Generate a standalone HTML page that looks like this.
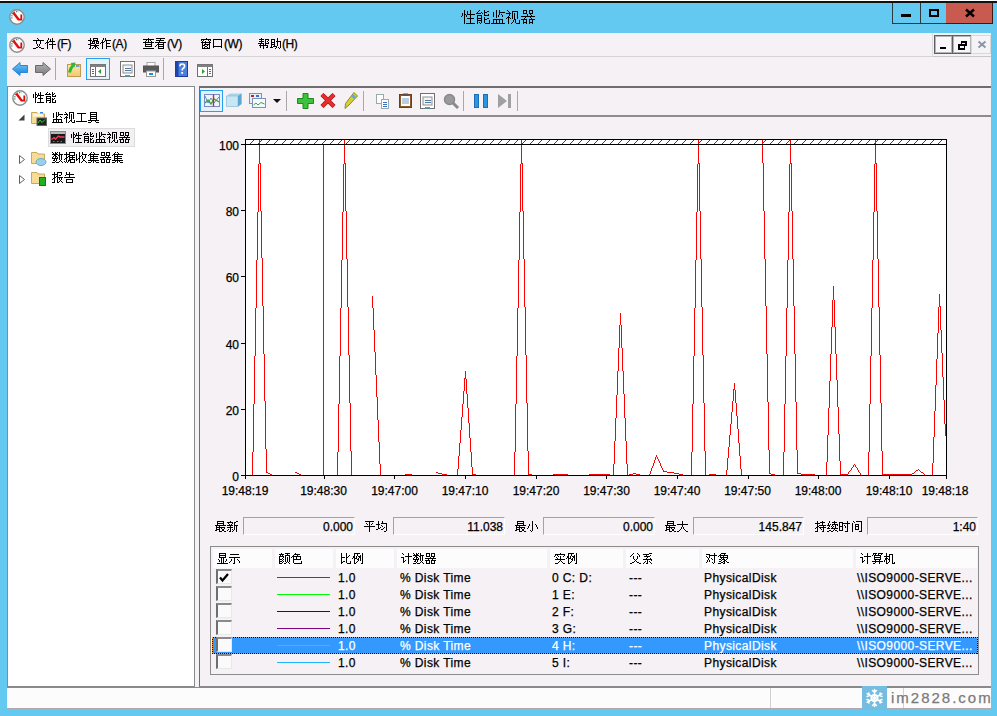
<!DOCTYPE html>
<html><head><meta charset="utf-8">
<style>
*{margin:0;padding:0;box-sizing:border-box}
html,body{width:997px;height:716px;overflow:hidden}
body{position:relative;background:#63c9f0;font-family:"Liberation Sans",sans-serif;font-size:12px;color:#000}
.a{position:absolute}
.t{position:absolute;white-space:nowrap;line-height:14px;-webkit-text-stroke:0.25px currentColor}
.g{vertical-align:top;overflow:visible}
.num{font-size:12px}
.cb{width:16px;height:15px;background:#fbfafb;border-top:2px solid #8a8a8a;border-left:2px solid #6e6e6e;border-right:1px solid #e8e8e8;border-bottom:1px solid #e8e8e8}
.vb{position:absolute;top:517px;height:18px;padding-top:1px;border-top:1px solid #a3a3a3;border-left:1px solid #a3a3a3;border-right:1px solid #fff;border-bottom:1px solid #fff;text-align:right;padding-right:1px;line-height:16px;-webkit-text-stroke:0.25px #000}
svg{overflow:visible}
</style></head><body>
<svg width="0" height="0" style="position:absolute;left:0;top:0"><defs><path id="g15_6027" d="M3 1h1v1h-1zM9 1h1v1h-1zM3 2h1v1h-1zM6 2h1v1h-1zM9 2h1v1h-1zM3 3h1v1h-1zM6 3h1v1h-1zM9 3h1v1h-1zM1 4h1v1h-1zM3 4h1v1h-1zM6 4h1v1h-1zM9 4h1v1h-1zM1 5h1v1h-1zM3 5h2v1h-2zM6 5h8v1h-8zM1 6h1v1h-1zM3 6h1v1h-1zM5 6h1v1h-1zM9 6h1v1h-1zM0 7h1v1h-1zM3 7h1v1h-1zM5 7h1v1h-1zM9 7h1v1h-1zM3 8h1v1h-1zM9 8h1v1h-1zM3 9h1v1h-1zM6 9h7v1h-7zM3 10h1v1h-1zM9 10h1v1h-1zM3 11h1v1h-1zM9 11h1v1h-1zM3 12h1v1h-1zM9 12h1v1h-1zM3 13h1v1h-1zM9 13h1v1h-1zM3 14h1v1h-1zM5 14h9v1h-9z"/><path id="g15_80fd" d="M3 1h1v1h-1zM8 1h1v1h-1zM2 2h1v1h-1zM8 2h1v1h-1zM11 2h2v1h-2zM1 3h1v1h-1zM5 3h1v1h-1zM8 3h3v1h-3zM0 4h5v1h-5zM6 4h1v1h-1zM8 4h1v1h-1zM8 5h1v1h-1zM12 5h1v1h-1zM1 6h5v1h-5zM8 6h5v1h-5zM1 7h1v1h-1zM5 7h1v1h-1zM1 8h1v1h-1zM5 8h1v1h-1zM8 8h1v1h-1zM1 9h5v1h-5zM8 9h1v1h-1zM11 9h2v1h-2zM1 10h1v1h-1zM5 10h1v1h-1zM8 10h3v1h-3zM1 11h5v1h-5zM8 11h1v1h-1zM13 11h1v1h-1zM1 12h1v1h-1zM5 12h1v1h-1zM8 12h1v1h-1zM13 12h1v1h-1zM1 13h1v1h-1zM3 13h1v1h-1zM5 13h1v1h-1zM8 13h1v1h-1zM13 13h1v1h-1zM1 14h1v1h-1zM4 14h1v1h-1zM9 14h5v1h-5z"/><path id="g15_76d1" d="M5 1h1v1h-1zM8 1h1v1h-1zM5 2h1v1h-1zM8 2h1v1h-1zM2 3h1v1h-1zM5 3h1v1h-1zM8 3h6v1h-6zM2 4h1v1h-1zM5 4h1v1h-1zM8 4h1v1h-1zM2 5h1v1h-1zM5 5h1v1h-1zM8 5h1v1h-1zM10 5h1v1h-1zM2 6h1v1h-1zM5 6h1v1h-1zM7 6h1v1h-1zM11 6h1v1h-1zM2 7h1v1h-1zM5 7h1v1h-1zM7 7h1v1h-1zM11 7h1v1h-1zM5 8h1v1h-1zM2 10h10v1h-10zM2 11h1v1h-1zM5 11h1v1h-1zM8 11h1v1h-1zM11 11h1v1h-1zM2 12h1v1h-1zM5 12h1v1h-1zM8 12h1v1h-1zM11 12h1v1h-1zM2 13h1v1h-1zM5 13h1v1h-1zM8 13h1v1h-1zM11 13h1v1h-1zM0 14h14v1h-14z"/><path id="g15_89c6" d="M1 1h1v1h-1zM2 2h1v1h-1zM6 2h6v1h-6zM3 3h1v1h-1zM6 3h1v1h-1zM11 3h1v1h-1zM0 4h5v1h-5zM6 4h1v1h-1zM8 4h1v1h-1zM11 4h1v1h-1zM3 5h1v1h-1zM6 5h1v1h-1zM8 5h1v1h-1zM11 5h1v1h-1zM3 6h1v1h-1zM6 6h1v1h-1zM8 6h1v1h-1zM11 6h1v1h-1zM2 7h1v1h-1zM6 7h1v1h-1zM8 7h1v1h-1zM11 7h1v1h-1zM1 8h3v1h-3zM6 8h1v1h-1zM8 8h1v1h-1zM11 8h1v1h-1zM0 9h1v1h-1zM2 9h1v1h-1zM4 9h1v1h-1zM6 9h1v1h-1zM8 9h1v1h-1zM11 9h1v1h-1zM2 10h1v1h-1zM8 10h2v1h-2zM2 11h1v1h-1zM7 11h1v1h-1zM9 11h1v1h-1zM13 11h1v1h-1zM2 12h1v1h-1zM7 12h1v1h-1zM9 12h1v1h-1zM13 12h1v1h-1zM2 13h1v1h-1zM6 13h1v1h-1zM9 13h1v1h-1zM13 13h1v1h-1zM2 14h1v1h-1zM5 14h1v1h-1zM10 14h4v1h-4z"/><path id="g15_5668" d="M2 1h4v1h-4zM8 1h4v1h-4zM2 2h1v1h-1zM5 2h1v1h-1zM8 2h1v1h-1zM11 2h1v1h-1zM2 3h1v1h-1zM5 3h1v1h-1zM8 3h1v1h-1zM11 3h1v1h-1zM2 4h4v1h-4zM8 4h4v1h-4zM6 5h1v1h-1zM9 5h1v1h-1zM6 6h1v1h-1zM10 6h1v1h-1zM0 7h14v1h-14zM4 8h1v1h-1zM9 8h1v1h-1zM3 9h1v1h-1zM10 9h1v1h-1zM0 10h6v1h-6zM8 10h6v1h-6zM2 11h1v1h-1zM5 11h1v1h-1zM8 11h1v1h-1zM11 11h1v1h-1zM2 12h1v1h-1zM5 12h1v1h-1zM8 12h1v1h-1zM11 12h1v1h-1zM2 13h4v1h-4zM8 13h4v1h-4zM2 14h1v1h-1zM5 14h1v1h-1zM8 14h1v1h-1zM11 14h1v1h-1z"/><path id="g12_6587" d="M4 1h1v1h-1zM5 2h1v1h-1zM0 3h11v1h-11zM3 4h1v1h-1zM7 4h1v1h-1zM3 5h1v1h-1zM7 5h1v1h-1zM3 6h1v1h-1zM7 6h1v1h-1zM4 7h1v1h-1zM6 7h1v1h-1zM4 8h1v1h-1zM6 8h1v1h-1zM5 9h1v1h-1zM3 10h2v1h-2zM6 10h2v1h-2zM0 11h3v1h-3zM8 11h3v1h-3z"/><path id="g12_4ef6" d="M3 1h1v1h-1zM7 1h1v1h-1zM3 2h1v1h-1zM5 2h1v1h-1zM7 2h1v1h-1zM2 3h1v1h-1zM5 3h1v1h-1zM7 3h1v1h-1zM2 4h1v1h-1zM4 4h6v1h-6zM1 5h3v1h-3zM7 5h1v1h-1zM0 6h1v1h-1zM2 6h1v1h-1zM7 6h1v1h-1zM2 7h1v1h-1zM4 7h7v1h-7zM2 8h1v1h-1zM7 8h1v1h-1zM2 9h1v1h-1zM7 9h1v1h-1zM2 10h1v1h-1zM7 10h1v1h-1zM2 11h1v1h-1zM7 11h1v1h-1z"/><path id="g12_64cd" d="M2 1h1v1h-1zM5 1h5v1h-5zM2 2h1v1h-1zM5 2h1v1h-1zM9 2h1v1h-1zM0 3h4v1h-4zM5 3h5v1h-5zM2 4h1v1h-1zM4 4h3v1h-3zM8 4h3v1h-3zM2 5h1v1h-1zM4 5h1v1h-1zM6 5h1v1h-1zM8 5h1v1h-1zM10 5h1v1h-1zM2 6h5v1h-5zM8 6h3v1h-3zM0 7h3v1h-3zM7 7h1v1h-1zM2 8h9v1h-9zM2 9h1v1h-1zM6 9h3v1h-3zM2 10h1v1h-1zM5 10h1v1h-1zM7 10h1v1h-1zM9 10h1v1h-1zM1 11h2v1h-2zM4 11h1v1h-1zM7 11h1v1h-1zM10 11h1v1h-1z"/><path id="g12_4f5c" d="M3 1h1v1h-1zM5 1h1v1h-1zM3 2h1v1h-1zM5 2h1v1h-1zM2 3h1v1h-1zM5 3h6v1h-6zM2 4h1v1h-1zM4 4h1v1h-1zM6 4h1v1h-1zM1 5h3v1h-3zM6 5h1v1h-1zM0 6h1v1h-1zM2 6h1v1h-1zM6 6h4v1h-4zM2 7h1v1h-1zM6 7h1v1h-1zM2 8h1v1h-1zM6 8h1v1h-1zM2 9h1v1h-1zM6 9h5v1h-5zM2 10h1v1h-1zM6 10h1v1h-1zM2 11h1v1h-1zM6 11h1v1h-1z"/><path id="g12_67e5" d="M5 1h1v1h-1zM0 2h11v1h-11zM3 3h1v1h-1zM5 3h1v1h-1zM7 3h1v1h-1zM2 4h1v1h-1zM5 4h1v1h-1zM8 4h1v1h-1zM0 5h11v1h-11zM2 6h1v1h-1zM8 6h1v1h-1zM2 7h7v1h-7zM2 8h1v1h-1zM8 8h1v1h-1zM2 9h7v1h-7zM0 11h11v1h-11z"/><path id="g12_770b" d="M1 1h9v1h-9zM5 2h1v1h-1zM1 3h8v1h-8zM4 4h1v1h-1zM0 5h11v1h-11zM3 6h1v1h-1zM8 6h1v1h-1zM2 7h7v1h-7zM1 8h1v1h-1zM3 8h1v1h-1zM8 8h1v1h-1zM0 9h1v1h-1zM3 9h6v1h-6zM3 10h1v1h-1zM8 10h1v1h-1zM3 11h6v1h-6z"/><path id="g12_7a97" d="M6 1h1v1h-1zM1 2h10v1h-10zM1 3h1v1h-1zM3 3h1v1h-1zM8 3h1v1h-1zM10 3h1v1h-1zM2 4h1v1h-1zM5 4h1v1h-1zM9 4h1v1h-1zM1 5h10v1h-10zM2 6h1v1h-1zM5 6h1v1h-1zM9 6h1v1h-1zM2 7h1v1h-1zM4 7h6v1h-6zM2 8h3v1h-3zM7 8h1v1h-1zM9 8h1v1h-1zM2 9h1v1h-1zM5 9h2v1h-2zM9 9h1v1h-1zM2 10h1v1h-1zM4 10h1v1h-1zM7 10h1v1h-1zM9 10h1v1h-1zM2 11h8v1h-8z"/><path id="g12_53e3" d="M1 2h9v1h-9zM1 3h1v1h-1zM9 3h1v1h-1zM1 4h1v1h-1zM9 4h1v1h-1zM1 5h1v1h-1zM9 5h1v1h-1zM1 6h1v1h-1zM9 6h1v1h-1zM1 7h1v1h-1zM9 7h1v1h-1zM1 8h1v1h-1zM9 8h1v1h-1zM1 9h9v1h-9zM1 10h1v1h-1zM9 10h1v1h-1z"/><path id="g12_5e2e" d="M3 1h1v1h-1zM1 2h5v1h-5zM7 2h4v1h-4zM3 3h1v1h-1zM7 3h1v1h-1zM10 3h1v1h-1zM1 4h5v1h-5zM7 4h1v1h-1zM9 4h1v1h-1zM3 5h1v1h-1zM7 5h1v1h-1zM10 5h1v1h-1zM0 6h6v1h-6zM7 6h4v1h-4zM2 7h1v1h-1zM5 7h1v1h-1zM7 7h1v1h-1zM1 8h9v1h-9zM2 9h1v1h-1zM5 9h1v1h-1zM9 9h1v1h-1zM2 10h1v1h-1zM5 10h1v1h-1zM8 10h2v1h-2zM5 11h1v1h-1z"/><path id="g12_52a9" d="M7 1h1v1h-1zM1 2h4v1h-4zM7 2h1v1h-1zM1 3h1v1h-1zM4 3h1v1h-1zM7 3h1v1h-1zM1 4h1v1h-1zM4 4h1v1h-1zM6 4h5v1h-5zM1 5h4v1h-4zM7 5h1v1h-1zM10 5h1v1h-1zM1 6h1v1h-1zM4 6h1v1h-1zM7 6h1v1h-1zM10 6h1v1h-1zM1 7h4v1h-4zM7 7h1v1h-1zM10 7h1v1h-1zM1 8h1v1h-1zM4 8h1v1h-1zM7 8h1v1h-1zM10 8h1v1h-1zM1 9h1v1h-1zM3 9h4v1h-4zM10 9h1v1h-1zM0 10h3v1h-3zM6 10h1v1h-1zM8 10h1v1h-1zM10 10h1v1h-1zM5 11h1v1h-1zM9 11h1v1h-1z"/><path id="g12_6027" d="M2 1h1v1h-1zM7 1h1v1h-1zM2 2h1v1h-1zM5 2h1v1h-1zM7 2h1v1h-1zM0 3h1v1h-1zM2 3h2v1h-2zM5 3h1v1h-1zM7 3h1v1h-1zM0 4h1v1h-1zM2 4h1v1h-1zM4 4h7v1h-7zM0 5h1v1h-1zM2 5h1v1h-1zM4 5h1v1h-1zM7 5h1v1h-1zM0 6h1v1h-1zM2 6h2v1h-2zM7 6h1v1h-1zM2 7h1v1h-1zM5 7h5v1h-5zM2 8h1v1h-1zM7 8h1v1h-1zM2 9h1v1h-1zM7 9h1v1h-1zM2 10h1v1h-1zM7 10h1v1h-1zM2 11h1v1h-1zM4 11h7v1h-7z"/><path id="g12_80fd" d="M2 1h1v1h-1zM7 1h1v1h-1zM1 2h1v1h-1zM4 2h1v1h-1zM7 2h1v1h-1zM9 2h1v1h-1zM0 3h6v1h-6zM7 3h2v1h-2zM7 4h1v1h-1zM10 4h1v1h-1zM1 5h5v1h-5zM7 5h4v1h-4zM1 6h1v1h-1zM5 6h1v1h-1zM1 7h5v1h-5zM7 7h1v1h-1zM9 7h1v1h-1zM1 8h1v1h-1zM5 8h1v1h-1zM7 8h2v1h-2zM1 9h5v1h-5zM7 9h1v1h-1zM10 9h1v1h-1zM1 10h1v1h-1zM5 10h1v1h-1zM7 10h1v1h-1zM10 10h1v1h-1zM1 11h1v1h-1zM4 11h2v1h-2zM7 11h4v1h-4z"/><path id="g12_76d1" d="M4 1h1v1h-1zM6 1h1v1h-1zM1 2h1v1h-1zM4 2h1v1h-1zM6 2h1v1h-1zM1 3h1v1h-1zM4 3h1v1h-1zM6 3h5v1h-5zM1 4h1v1h-1zM4 4h1v1h-1zM6 4h1v1h-1zM1 5h1v1h-1zM4 5h2v1h-2zM8 5h1v1h-1zM1 6h1v1h-1zM4 6h1v1h-1zM9 6h1v1h-1zM4 7h1v1h-1zM1 8h9v1h-9zM1 9h1v1h-1zM4 9h1v1h-1zM6 9h1v1h-1zM9 9h1v1h-1zM1 10h1v1h-1zM4 10h1v1h-1zM6 10h1v1h-1zM9 10h1v1h-1zM0 11h11v1h-11z"/><path id="g12_89c6" d="M1 1h1v1h-1zM5 1h5v1h-5zM2 2h1v1h-1zM5 2h1v1h-1zM9 2h1v1h-1zM0 3h4v1h-4zM5 3h1v1h-1zM7 3h1v1h-1zM9 3h1v1h-1zM3 4h1v1h-1zM5 4h1v1h-1zM7 4h1v1h-1zM9 4h1v1h-1zM2 5h1v1h-1zM5 5h1v1h-1zM7 5h1v1h-1zM9 5h1v1h-1zM1 6h3v1h-3zM5 6h1v1h-1zM7 6h1v1h-1zM9 6h1v1h-1zM0 7h1v1h-1zM2 7h1v1h-1zM5 7h1v1h-1zM7 7h1v1h-1zM9 7h1v1h-1zM2 8h1v1h-1zM7 8h1v1h-1zM2 9h1v1h-1zM6 9h2v1h-2zM10 9h1v1h-1zM2 10h1v1h-1zM5 10h1v1h-1zM7 10h1v1h-1zM10 10h1v1h-1zM2 11h1v1h-1zM4 11h1v1h-1zM8 11h3v1h-3z"/><path id="g12_5de5" d="M1 2h9v1h-9zM5 3h1v1h-1zM5 4h1v1h-1zM5 5h1v1h-1zM5 6h1v1h-1zM5 7h1v1h-1zM5 8h1v1h-1zM5 9h1v1h-1zM0 10h11v1h-11z"/><path id="g12_5177" d="M2 1h7v1h-7zM2 2h1v1h-1zM8 2h1v1h-1zM2 3h7v1h-7zM2 4h1v1h-1zM8 4h1v1h-1zM2 5h7v1h-7zM2 6h1v1h-1zM8 6h1v1h-1zM2 7h7v1h-7zM2 8h1v1h-1zM8 8h1v1h-1zM0 9h11v1h-11zM3 10h1v1h-1zM7 10h1v1h-1zM0 11h3v1h-3zM8 11h3v1h-3z"/><path id="g12_5668" d="M1 1h4v1h-4zM6 1h4v1h-4zM1 2h1v1h-1zM4 2h1v1h-1zM6 2h1v1h-1zM9 2h1v1h-1zM1 3h1v1h-1zM4 3h1v1h-1zM6 3h1v1h-1zM9 3h1v1h-1zM1 4h4v1h-4zM6 4h4v1h-4zM5 5h1v1h-1zM8 5h1v1h-1zM0 6h11v1h-11zM3 7h1v1h-1zM7 7h1v1h-1zM0 8h5v1h-5zM6 8h5v1h-5zM1 9h1v1h-1zM4 9h1v1h-1zM6 9h1v1h-1zM9 9h1v1h-1zM1 10h1v1h-1zM4 10h1v1h-1zM6 10h1v1h-1zM9 10h1v1h-1zM1 11h4v1h-4zM6 11h4v1h-4z"/><path id="g12_6570" d="M0 1h1v1h-1zM3 1h1v1h-1zM5 1h1v1h-1zM7 1h1v1h-1zM1 2h1v1h-1zM3 2h2v1h-2zM7 2h1v1h-1zM0 3h6v1h-6zM7 3h4v1h-4zM2 4h2v1h-2zM6 4h2v1h-2zM9 4h1v1h-1zM1 5h1v1h-1zM3 5h2v1h-2zM7 5h1v1h-1zM9 5h1v1h-1zM0 6h1v1h-1zM3 6h1v1h-1zM5 6h1v1h-1zM7 6h1v1h-1zM9 6h1v1h-1zM0 7h6v1h-6zM7 7h1v1h-1zM9 7h1v1h-1zM2 8h1v1h-1zM4 8h1v1h-1zM7 8h1v1h-1zM9 8h1v1h-1zM1 9h2v1h-2zM4 9h1v1h-1zM8 9h1v1h-1zM3 10h1v1h-1zM7 10h1v1h-1zM9 10h1v1h-1zM0 11h3v1h-3zM4 11h3v1h-3zM10 11h1v1h-1z"/><path id="g12_636e" d="M2 1h1v1h-1zM5 1h6v1h-6zM2 2h1v1h-1zM5 2h1v1h-1zM10 2h1v1h-1zM0 3h6v1h-6zM10 3h1v1h-1zM2 4h1v1h-1zM5 4h6v1h-6zM2 5h1v1h-1zM4 5h2v1h-2zM8 5h1v1h-1zM2 6h2v1h-2zM5 6h6v1h-6zM1 7h2v1h-2zM5 7h1v1h-1zM8 7h1v1h-1zM0 8h1v1h-1zM2 8h1v1h-1zM5 8h6v1h-6zM2 9h1v1h-1zM4 9h3v1h-3zM10 9h1v1h-1zM0 10h1v1h-1zM2 10h1v1h-1zM4 10h1v1h-1zM6 10h1v1h-1zM10 10h1v1h-1zM1 11h1v1h-1zM3 11h1v1h-1zM6 11h5v1h-5z"/><path id="g12_6536" d="M3 1h1v1h-1zM6 1h1v1h-1zM3 2h1v1h-1zM6 2h1v1h-1zM0 3h1v1h-1zM3 3h1v1h-1zM6 3h5v1h-5zM0 4h1v1h-1zM3 4h1v1h-1zM5 4h1v1h-1zM9 4h1v1h-1zM0 5h1v1h-1zM3 5h2v1h-2zM6 5h1v1h-1zM9 5h1v1h-1zM0 6h1v1h-1zM3 6h1v1h-1zM6 6h1v1h-1zM9 6h1v1h-1zM0 7h1v1h-1zM2 7h2v1h-2zM6 7h1v1h-1zM8 7h1v1h-1zM0 8h2v1h-2zM3 8h1v1h-1zM7 8h1v1h-1zM0 9h1v1h-1zM3 9h1v1h-1zM7 9h2v1h-2zM3 10h1v1h-1zM6 10h1v1h-1zM9 10h1v1h-1zM3 11h1v1h-1zM5 11h1v1h-1zM10 11h1v1h-1z"/><path id="g12_96c6" d="M3 1h1v1h-1zM5 1h1v1h-1zM2 2h1v1h-1zM6 2h1v1h-1zM1 3h10v1h-10zM0 4h1v1h-1zM2 4h1v1h-1zM5 4h1v1h-1zM2 5h8v1h-8zM2 6h1v1h-1zM5 6h1v1h-1zM2 7h8v1h-8zM2 8h1v1h-1zM5 8h1v1h-1zM0 9h11v1h-11zM3 10h1v1h-1zM5 10h1v1h-1zM7 10h1v1h-1zM0 11h3v1h-3zM5 11h1v1h-1zM8 11h3v1h-3z"/><path id="g12_62a5" d="M2 1h1v1h-1zM5 1h5v1h-5zM2 2h1v1h-1zM5 2h1v1h-1zM9 2h1v1h-1zM0 3h6v1h-6zM9 3h1v1h-1zM2 4h1v1h-1zM5 4h1v1h-1zM7 4h2v1h-2zM2 5h1v1h-1zM4 5h2v1h-2zM2 6h2v1h-2zM5 6h6v1h-6zM1 7h2v1h-2zM5 7h1v1h-1zM7 7h1v1h-1zM9 7h1v1h-1zM0 8h1v1h-1zM2 8h1v1h-1zM5 8h1v1h-1zM7 8h1v1h-1zM9 8h1v1h-1zM2 9h1v1h-1zM5 9h1v1h-1zM8 9h1v1h-1zM2 10h1v1h-1zM5 10h1v1h-1zM7 10h1v1h-1zM9 10h1v1h-1zM0 11h3v1h-3zM5 11h2v1h-2zM10 11h1v1h-1z"/><path id="g12_544a" d="M2 1h1v1h-1zM5 1h1v1h-1zM2 2h1v1h-1zM5 2h1v1h-1zM2 3h8v1h-8zM1 4h1v1h-1zM5 4h1v1h-1zM5 5h1v1h-1zM0 6h11v1h-11zM2 8h7v1h-7zM2 9h1v1h-1zM8 9h1v1h-1zM2 10h1v1h-1zM8 10h1v1h-1zM2 11h7v1h-7z"/><path id="g12_6700" d="M2 1h7v1h-7zM2 2h1v1h-1zM8 2h1v1h-1zM2 3h7v1h-7zM2 4h1v1h-1zM8 4h1v1h-1zM0 5h11v1h-11zM1 6h1v1h-1zM4 6h1v1h-1zM1 7h9v1h-9zM1 8h1v1h-1zM4 8h1v1h-1zM6 8h1v1h-1zM9 8h1v1h-1zM1 9h4v1h-4zM7 9h2v1h-2zM0 10h2v1h-2zM4 10h1v1h-1zM7 10h2v1h-2zM4 11h3v1h-3zM9 11h2v1h-2z"/><path id="g12_65b0" d="M3 1h1v1h-1zM9 1h2v1h-2zM0 2h6v1h-6zM7 2h2v1h-2zM1 3h1v1h-1zM5 3h1v1h-1zM7 3h1v1h-1zM2 4h1v1h-1zM4 4h1v1h-1zM7 4h1v1h-1zM0 5h6v1h-6zM7 5h4v1h-4zM3 6h1v1h-1zM7 6h1v1h-1zM9 6h1v1h-1zM0 7h6v1h-6zM7 7h1v1h-1zM9 7h1v1h-1zM3 8h1v1h-1zM7 8h1v1h-1zM9 8h1v1h-1zM1 9h1v1h-1zM3 9h1v1h-1zM5 9h1v1h-1zM7 9h1v1h-1zM9 9h1v1h-1zM0 10h1v1h-1zM3 10h1v1h-1zM6 10h1v1h-1zM9 10h1v1h-1zM2 11h2v1h-2zM5 11h1v1h-1zM9 11h1v1h-1z"/><path id="g12_5e73" d="M1 1h9v1h-9zM5 2h1v1h-1zM2 3h1v1h-1zM5 3h1v1h-1zM8 3h1v1h-1zM3 4h1v1h-1zM5 4h1v1h-1zM7 4h1v1h-1zM5 5h1v1h-1zM0 6h11v1h-11zM5 7h1v1h-1zM5 8h1v1h-1zM5 9h1v1h-1zM5 10h1v1h-1zM5 11h1v1h-1z"/><path id="g12_5747" d="M2 1h1v1h-1zM6 1h1v1h-1zM2 2h1v1h-1zM6 2h1v1h-1zM2 3h1v1h-1zM5 3h6v1h-6zM0 4h4v1h-4zM10 4h1v1h-1zM2 5h1v1h-1zM5 5h1v1h-1zM10 5h1v1h-1zM2 6h1v1h-1zM6 6h1v1h-1zM10 6h1v1h-1zM2 7h1v1h-1zM4 7h1v1h-1zM8 7h1v1h-1zM10 7h1v1h-1zM2 8h2v1h-2zM7 8h1v1h-1zM10 8h1v1h-1zM0 9h2v1h-2zM5 9h2v1h-2zM10 9h1v1h-1zM10 10h1v1h-1zM8 11h2v1h-2z"/><path id="g12_5c0f" d="M5 1h1v1h-1zM5 2h1v1h-1zM5 3h1v1h-1zM2 4h1v1h-1zM5 4h1v1h-1zM8 4h1v1h-1zM2 5h1v1h-1zM5 5h1v1h-1zM9 5h1v1h-1zM1 6h1v1h-1zM5 6h1v1h-1zM9 6h1v1h-1zM1 7h1v1h-1zM5 7h1v1h-1zM10 7h1v1h-1zM0 8h1v1h-1zM5 8h1v1h-1zM10 8h1v1h-1zM5 9h1v1h-1zM3 10h1v1h-1zM5 10h1v1h-1zM4 11h1v1h-1z"/><path id="g12_5927" d="M5 1h1v1h-1zM5 2h1v1h-1zM5 3h1v1h-1zM0 4h11v1h-11zM5 5h1v1h-1zM5 6h1v1h-1zM4 7h1v1h-1zM6 7h1v1h-1zM4 8h1v1h-1zM6 8h1v1h-1zM3 9h1v1h-1zM7 9h1v1h-1zM2 10h1v1h-1zM8 10h1v1h-1zM0 11h2v1h-2zM9 11h2v1h-2z"/><path id="g12_6301" d="M2 1h1v1h-1zM7 1h1v1h-1zM2 2h1v1h-1zM5 2h5v1h-5zM0 3h5v1h-5zM7 3h1v1h-1zM2 4h1v1h-1zM7 4h1v1h-1zM2 5h1v1h-1zM4 5h7v1h-7zM2 6h2v1h-2zM8 6h1v1h-1zM1 7h2v1h-2zM4 7h7v1h-7zM0 8h1v1h-1zM2 8h1v1h-1zM5 8h1v1h-1zM8 8h1v1h-1zM2 9h1v1h-1zM6 9h1v1h-1zM8 9h1v1h-1zM2 10h1v1h-1zM8 10h1v1h-1zM0 11h3v1h-3zM7 11h2v1h-2z"/><path id="g12_7eed" d="M2 1h1v1h-1zM7 1h1v1h-1zM2 2h1v1h-1zM5 2h5v1h-5zM1 3h1v1h-1zM7 3h1v1h-1zM1 4h1v1h-1zM3 4h1v1h-1zM5 4h6v1h-6zM0 5h3v1h-3zM5 5h1v1h-1zM8 5h1v1h-1zM10 5h1v1h-1zM2 6h1v1h-1zM4 6h1v1h-1zM6 6h1v1h-1zM8 6h1v1h-1zM1 7h1v1h-1zM5 7h1v1h-1zM8 7h1v1h-1zM0 8h3v1h-3zM4 8h7v1h-7zM7 9h1v1h-1zM2 10h2v1h-2zM6 10h1v1h-1zM8 10h2v1h-2zM0 11h2v1h-2zM4 11h2v1h-2zM10 11h1v1h-1z"/><path id="g12_65f6" d="M8 1h1v1h-1zM0 2h4v1h-4zM8 2h1v1h-1zM0 3h1v1h-1zM3 3h8v1h-8zM0 4h1v1h-1zM3 4h1v1h-1zM8 4h1v1h-1zM0 5h1v1h-1zM3 5h1v1h-1zM5 5h1v1h-1zM8 5h1v1h-1zM0 6h4v1h-4zM6 6h1v1h-1zM8 6h1v1h-1zM0 7h1v1h-1zM3 7h1v1h-1zM6 7h1v1h-1zM8 7h1v1h-1zM0 8h1v1h-1zM3 8h1v1h-1zM8 8h1v1h-1zM0 9h1v1h-1zM3 9h1v1h-1zM8 9h1v1h-1zM0 10h4v1h-4zM8 10h1v1h-1zM6 11h3v1h-3z"/><path id="g12_95f4" d="M2 1h1v1h-1zM5 1h6v1h-6zM3 2h1v1h-1zM10 2h1v1h-1zM1 3h1v1h-1zM10 3h1v1h-1zM1 4h1v1h-1zM4 4h4v1h-4zM10 4h1v1h-1zM1 5h1v1h-1zM4 5h1v1h-1zM7 5h1v1h-1zM10 5h1v1h-1zM1 6h1v1h-1zM4 6h4v1h-4zM10 6h1v1h-1zM1 7h1v1h-1zM4 7h1v1h-1zM7 7h1v1h-1zM10 7h1v1h-1zM1 8h1v1h-1zM4 8h1v1h-1zM7 8h1v1h-1zM10 8h1v1h-1zM1 9h1v1h-1zM4 9h4v1h-4zM10 9h1v1h-1zM1 10h1v1h-1zM10 10h1v1h-1zM1 11h1v1h-1zM8 11h3v1h-3z"/><path id="g12_663e" d="M2 1h7v1h-7zM2 2h1v1h-1zM8 2h1v1h-1zM2 3h7v1h-7zM2 4h1v1h-1zM8 4h1v1h-1zM2 5h7v1h-7zM4 6h1v1h-1zM6 6h1v1h-1zM1 7h1v1h-1zM4 7h1v1h-1zM6 7h1v1h-1zM9 7h1v1h-1zM2 8h1v1h-1zM4 8h1v1h-1zM6 8h1v1h-1zM9 8h1v1h-1zM2 9h1v1h-1zM4 9h1v1h-1zM6 9h1v1h-1zM8 9h1v1h-1zM4 10h1v1h-1zM6 10h1v1h-1zM0 11h11v1h-11z"/><path id="g12_793a" d="M1 2h9v1h-9zM0 5h11v1h-11zM5 6h1v1h-1zM2 7h1v1h-1zM5 7h1v1h-1zM8 7h1v1h-1zM2 8h1v1h-1zM5 8h1v1h-1zM9 8h1v1h-1zM1 9h1v1h-1zM5 9h1v1h-1zM10 9h1v1h-1zM0 10h1v1h-1zM5 10h1v1h-1zM10 10h1v1h-1zM4 11h2v1h-2z"/><path id="g12_989c" d="M2 1h1v1h-1zM6 1h5v1h-5zM0 2h5v1h-5zM8 2h1v1h-1zM1 3h1v1h-1zM3 3h1v1h-1zM6 3h5v1h-5zM0 4h5v1h-5zM6 4h1v1h-1zM10 4h1v1h-1zM0 5h1v1h-1zM4 5h1v1h-1zM6 5h1v1h-1zM8 5h1v1h-1zM10 5h1v1h-1zM0 6h1v1h-1zM3 6h1v1h-1zM6 6h1v1h-1zM8 6h1v1h-1zM10 6h1v1h-1zM0 7h3v1h-3zM4 7h1v1h-1zM6 7h1v1h-1zM8 7h1v1h-1zM10 7h1v1h-1zM0 8h1v1h-1zM3 8h1v1h-1zM6 8h1v1h-1zM8 8h1v1h-1zM10 8h1v1h-1zM0 9h3v1h-3zM4 9h1v1h-1zM6 9h1v1h-1zM8 9h1v1h-1zM10 9h1v1h-1zM0 10h1v1h-1zM3 10h1v1h-1zM7 10h1v1h-1zM9 10h1v1h-1zM0 11h3v1h-3zM5 11h2v1h-2zM10 11h1v1h-1z"/><path id="g12_8272" d="M4 1h1v1h-1zM3 2h6v1h-6zM2 3h1v1h-1zM6 3h1v1h-1zM1 4h9v1h-9zM0 5h1v1h-1zM2 5h1v1h-1zM5 5h1v1h-1zM9 5h1v1h-1zM2 6h1v1h-1zM5 6h1v1h-1zM9 6h1v1h-1zM2 7h8v1h-8zM2 8h1v1h-1zM2 9h1v1h-1zM10 9h1v1h-1zM2 10h1v1h-1zM10 10h1v1h-1zM3 11h8v1h-8z"/><path id="g12_6bd4" d="M1 1h1v1h-1zM6 1h1v1h-1zM1 2h1v1h-1zM6 2h1v1h-1zM1 3h1v1h-1zM6 3h1v1h-1zM9 3h1v1h-1zM1 4h1v1h-1zM6 4h1v1h-1zM8 4h1v1h-1zM1 5h4v1h-4zM6 5h2v1h-2zM1 6h1v1h-1zM6 6h1v1h-1zM1 7h1v1h-1zM6 7h1v1h-1zM1 8h1v1h-1zM6 8h1v1h-1zM1 9h1v1h-1zM3 9h2v1h-2zM6 9h1v1h-1zM10 9h1v1h-1zM1 10h2v1h-2zM6 10h1v1h-1zM10 10h1v1h-1zM1 11h1v1h-1zM7 11h4v1h-4z"/><path id="g12_4f8b" d="M2 1h6v1h-6zM10 1h1v1h-1zM2 2h1v1h-1zM5 2h1v1h-1zM10 2h1v1h-1zM2 3h1v1h-1zM5 3h1v1h-1zM8 3h1v1h-1zM10 3h1v1h-1zM1 4h2v1h-2zM4 4h1v1h-1zM6 4h3v1h-3zM10 4h1v1h-1zM1 5h2v1h-2zM4 5h1v1h-1zM7 5h2v1h-2zM10 5h1v1h-1zM0 6h1v1h-1zM2 6h3v1h-3zM6 6h1v1h-1zM8 6h1v1h-1zM10 6h1v1h-1zM2 7h1v1h-1zM5 7h2v1h-2zM8 7h1v1h-1zM10 7h1v1h-1zM2 8h1v1h-1zM6 8h1v1h-1zM8 8h1v1h-1zM10 8h1v1h-1zM2 9h1v1h-1zM5 9h1v1h-1zM10 9h1v1h-1zM2 10h1v1h-1zM4 10h1v1h-1zM10 10h1v1h-1zM2 11h2v1h-2zM9 11h2v1h-2z"/><path id="g12_8ba1" d="M1 1h1v1h-1zM7 1h1v1h-1zM2 2h1v1h-1zM7 2h1v1h-1zM7 3h1v1h-1zM4 4h7v1h-7zM0 5h3v1h-3zM7 5h1v1h-1zM2 6h1v1h-1zM7 6h1v1h-1zM2 7h1v1h-1zM7 7h1v1h-1zM2 8h1v1h-1zM4 8h1v1h-1zM7 8h1v1h-1zM2 9h2v1h-2zM7 9h1v1h-1zM2 10h1v1h-1zM7 10h1v1h-1zM7 11h1v1h-1z"/><path id="g12_5b9e" d="M6 1h1v1h-1zM1 2h10v1h-10zM1 3h1v1h-1zM3 3h1v1h-1zM10 3h1v1h-1zM0 4h1v1h-1zM4 4h1v1h-1zM6 4h1v1h-1zM9 4h1v1h-1zM2 5h1v1h-1zM6 5h1v1h-1zM3 6h1v1h-1zM6 6h1v1h-1zM1 7h10v1h-10zM6 8h1v1h-1zM5 9h1v1h-1zM7 9h1v1h-1zM4 10h1v1h-1zM8 10h1v1h-1zM1 11h3v1h-3zM9 11h2v1h-2z"/><path id="g12_7236" d="M3 1h1v1h-1zM7 1h1v1h-1zM2 2h1v1h-1zM8 2h1v1h-1zM1 3h1v1h-1zM9 3h1v1h-1zM0 4h1v1h-1zM3 4h1v1h-1zM7 4h1v1h-1zM9 4h1v1h-1zM3 5h1v1h-1zM7 5h1v1h-1zM3 6h1v1h-1zM7 6h1v1h-1zM4 7h1v1h-1zM6 7h1v1h-1zM5 8h1v1h-1zM4 9h1v1h-1zM6 9h1v1h-1zM2 10h2v1h-2zM7 10h2v1h-2zM0 11h2v1h-2zM9 11h2v1h-2z"/><path id="g12_7cfb" d="M7 1h3v1h-3zM1 2h6v1h-6zM4 3h1v1h-1zM8 3h1v1h-1zM2 4h6v1h-6zM5 5h1v1h-1zM4 6h1v1h-1zM8 6h1v1h-1zM1 7h9v1h-9zM5 8h1v1h-1zM9 8h1v1h-1zM3 9h1v1h-1zM5 9h1v1h-1zM7 9h1v1h-1zM2 10h1v1h-1zM5 10h1v1h-1zM8 10h1v1h-1zM1 11h1v1h-1zM4 11h2v1h-2zM9 11h1v1h-1z"/><path id="g12_5bf9" d="M8 1h1v1h-1zM0 2h4v1h-4zM8 2h1v1h-1zM3 3h8v1h-8zM0 4h1v1h-1zM3 4h1v1h-1zM8 4h1v1h-1zM1 5h1v1h-1zM3 5h1v1h-1zM8 5h1v1h-1zM2 6h1v1h-1zM5 6h1v1h-1zM8 6h1v1h-1zM2 7h1v1h-1zM6 7h1v1h-1zM8 7h1v1h-1zM1 8h1v1h-1zM3 8h1v1h-1zM8 8h1v1h-1zM1 9h1v1h-1zM3 9h1v1h-1zM8 9h1v1h-1zM0 10h1v1h-1zM6 10h1v1h-1zM8 10h1v1h-1zM7 11h1v1h-1z"/><path id="g12_8c61" d="M3 1h5v1h-5zM2 2h1v1h-1zM6 2h1v1h-1zM1 3h9v1h-9zM0 4h1v1h-1zM2 4h1v1h-1zM5 4h1v1h-1zM9 4h1v1h-1zM2 5h8v1h-8zM3 6h1v1h-1zM5 6h1v1h-1zM9 6h1v1h-1zM1 7h2v1h-2zM4 7h3v1h-3zM8 7h1v1h-1zM3 8h1v1h-1zM6 8h2v1h-2zM1 9h2v1h-2zM5 9h2v1h-2zM8 9h1v1h-1zM3 10h2v1h-2zM6 10h1v1h-1zM9 10h2v1h-2zM0 11h3v1h-3zM5 11h2v1h-2z"/><path id="g12_7b97" d="M1 1h4v1h-4zM6 1h5v1h-5zM1 2h1v1h-1zM3 2h1v1h-1zM6 2h1v1h-1zM9 2h1v1h-1zM0 3h1v1h-1zM2 3h7v1h-7zM2 4h1v1h-1zM8 4h1v1h-1zM2 5h7v1h-7zM2 6h1v1h-1zM8 6h1v1h-1zM2 7h7v1h-7zM3 8h1v1h-1zM7 8h1v1h-1zM0 9h11v1h-11zM3 10h1v1h-1zM7 10h1v1h-1zM1 11h2v1h-2zM7 11h1v1h-1z"/><path id="g12_673a" d="M2 1h1v1h-1zM2 2h1v1h-1zM5 2h4v1h-4zM2 3h1v1h-1zM5 3h1v1h-1zM8 3h1v1h-1zM0 4h6v1h-6zM8 4h1v1h-1zM2 5h1v1h-1zM5 5h1v1h-1zM8 5h1v1h-1zM1 6h3v1h-3zM5 6h1v1h-1zM8 6h1v1h-1zM1 7h2v1h-2zM4 7h2v1h-2zM8 7h1v1h-1zM0 8h1v1h-1zM2 8h1v1h-1zM5 8h1v1h-1zM8 8h1v1h-1zM0 9h1v1h-1zM2 9h1v1h-1zM5 9h1v1h-1zM8 9h1v1h-1zM2 10h1v1h-1zM4 10h1v1h-1zM8 10h1v1h-1zM10 10h1v1h-1zM2 11h2v1h-2zM8 11h3v1h-3z"/></defs></svg>
<div class="a" style="left:0;top:0;width:997px;height:1px;background:#fff"></div>
<div class="a" style="left:0;top:1px;width:997px;height:2px;background:#111"></div>
<!-- app icon -->
<svg class="a" style="left:9px;top:9px" width="16" height="16" viewBox="0 0 16 16"><circle cx="8" cy="8" r="7.2" fill="#fdfdfd" stroke="#8c8c8c" stroke-width="1.4"/><path d="M3 9.5A5.2 5.2 0 0 1 9.5 2.9" fill="none" stroke="#3d7a5a" stroke-width="1.2" stroke-dasharray="1.2 1"/><path d="M4.2 3.6 L9.6 10.4" stroke="#e80c0c" stroke-width="2.4"/><path d="M9 10.6 H12.3 V5.6" fill="none" stroke="#d80c0c" stroke-width="1.8"/></svg>
<div class="t" style="left:461px;top:9px;font-size:15px;line-height:16px;"><svg class="g" width="15" height="16"><use href="#g15_6027"/></svg><svg class="g" width="15" height="16"><use href="#g15_80fd"/></svg><svg class="g" width="15" height="16"><use href="#g15_76d1"/></svg><svg class="g" width="15" height="16"><use href="#g15_89c6"/></svg><svg class="g" width="15" height="16"><use href="#g15_5668"/></svg></div>
<!-- title buttons -->
<div class="a" style="left:892px;top:3px;width:29px;height:21px;border:1px solid #2a3a40;border-top:0;background:#63c9f0"></div>
<div class="a" style="left:901px;top:14px;width:10px;height:3px;background:#000"></div>
<div class="a" style="left:920px;top:3px;width:27px;height:21px;border:1px solid #2a3a40;border-top:0;border-left:1px solid #2a3a40;background:#63c9f0"></div>
<div class="a" style="left:929px;top:9px;width:10px;height:8px;border:2px solid #000"></div>
<div class="a" style="left:946px;top:3px;width:47px;height:21px;border:1px solid #3a1a16;border-top:0;border-left:0;background:#c85a50"></div>
<svg class="a" style="left:965px;top:9px" width="10" height="8" viewBox="0 0 10 8"><path d="M1 0.5 L9 7.5 M9 0.5 L1 7.5" stroke="#000" stroke-width="2.4"/></svg>

<!-- client -->
<div class="a" style="left:7px;top:33px;width:984px;height:676px;background:#f5f1f5"></div>
<div class="a" style="left:7px;top:56px;width:926px;height:1px;background:#d6d3d6"></div>
<div class="a" style="left:932px;top:33px;width:1px;height:23px;background:#dcd9dc"></div>
<div class="a" style="left:933px;top:56px;width:58px;height:1px;background:#c9c6c9"></div>
<!-- mdi buttons -->
<div class="a" style="left:934px;top:35px;width:19px;height:19px;border:1px solid #5f5f5f;box-shadow:inset 0 0 0 1px #b4b4b4;background:#f8f6f8"></div>
<div class="a" style="left:940px;top:47px;width:6px;height:2px;background:#000"></div>
<div class="a" style="left:952px;top:35px;width:20px;height:19px;border:1px solid #5f5f5f;box-shadow:inset 0 0 0 1px #b4b4b4;background:#f8f6f8"></div>
<svg class="a" style="left:957px;top:40px" width="11" height="10" viewBox="0 0 11 10" shape-rendering="crispEdges"><rect x="4" y="1" width="6" height="2" fill="#000"/><rect x="8" y="1" width="2" height="5" fill="#000"/><rect x="4" y="1" width="1" height="3" fill="#000"/><rect x="1" y="4" width="7" height="2" fill="#000"/><rect x="1" y="4" width="1.5" height="5" fill="#000"/><rect x="6.5" y="4" width="1.5" height="5" fill="#000"/><rect x="1" y="8" width="7" height="1.5" fill="#000"/></svg>
<div class="a" style="left:971px;top:35px;width:20px;height:19px;border:1px solid #d8d8d8;background:#f5f3f5"></div>
<svg class="a" style="left:978px;top:41px" width="8" height="7" viewBox="0 0 8 7"><path d="M0.5 0.5 L7.5 6.5 M7.5 0.5 L0.5 6.5" stroke="#8793a6" stroke-width="1.8"/></svg>
<!-- menu icon -->
<svg class="a" style="left:9px;top:37px" width="16" height="16" viewBox="0 0 16 16"><circle cx="8" cy="8" r="7.2" fill="#fdfdfd" stroke="#8c8c8c" stroke-width="1.4"/><path d="M3 9.5A5.2 5.2 0 0 1 9.5 2.9" fill="none" stroke="#3d7a5a" stroke-width="1.2" stroke-dasharray="1.2 1"/><path d="M4.2 3.6 L9.6 10.4" stroke="#e80c0c" stroke-width="2.4"/><path d="M9 10.6 H12.3 V5.6" fill="none" stroke="#d80c0c" stroke-width="1.8"/></svg>
<div class="t" style="left:33px;top:37px"><svg class="g" width="12" height="14"><use href="#g12_6587"/></svg><svg class="g" width="12" height="14"><use href="#g12_4ef6"/></svg><span style="letter-spacing:-0.4px">(F)</span></div>
<div class="t" style="left:88px;top:37px"><svg class="g" width="12" height="14"><use href="#g12_64cd"/></svg><svg class="g" width="12" height="14"><use href="#g12_4f5c"/></svg><span style="letter-spacing:-0.4px">(A)</span></div>
<div class="t" style="left:143px;top:37px"><svg class="g" width="12" height="14"><use href="#g12_67e5"/></svg><svg class="g" width="12" height="14"><use href="#g12_770b"/></svg><span style="letter-spacing:-0.4px">(V)</span></div>
<div class="t" style="left:200px;top:37px"><svg class="g" width="12" height="14"><use href="#g12_7a97"/></svg><svg class="g" width="12" height="14"><use href="#g12_53e3"/></svg><span style="letter-spacing:-0.4px">(W)</span></div>
<div class="t" style="left:258px;top:37px"><svg class="g" width="12" height="14"><use href="#g12_5e2e"/></svg><svg class="g" width="12" height="14"><use href="#g12_52a9"/></svg><span style="letter-spacing:-0.4px">(H)</span></div>

<!-- main toolbar -->
<svg class="a" style="left:12px;top:62px" width="16" height="14" viewBox="0 0 16 14"><defs><linearGradient id="ba" x1="0" y1="0" x2="0" y2="1"><stop offset="0" stop-color="#7cc8f4"/><stop offset="0.55" stop-color="#3aa2ea"/><stop offset="1" stop-color="#1a7ad0"/></linearGradient></defs><path d="M0.5 7 L8 0.5 L8 3.5 L15.5 3.5 L15.5 10.5 L8 10.5 L8 13.5 Z" fill="url(#ba)" stroke="#2a88d8" stroke-width="1"/></svg>
<svg class="a" style="left:35px;top:62px" width="16" height="14" viewBox="0 0 16 14"><defs><linearGradient id="fa" x1="0" y1="0" x2="0" y2="1"><stop offset="0" stop-color="#b4b4b4"/><stop offset="1" stop-color="#7a7a7a"/></linearGradient></defs><path d="M15.5 7 L8 0.5 L8 3.5 L0.5 3.5 L0.5 10.5 L8 10.5 L8 13.5 Z" fill="url(#fa)" stroke="#6a6a6a" stroke-width="1"/></svg>
<div class="a" style="left:55px;top:58px;width:1px;height:22px;background:#a8a8a8"></div>
<svg class="a" style="left:66px;top:62px" width="16" height="15" viewBox="0 0 16 15"><defs><linearGradient id="fd" x1="0" y1="0" x2="0" y2="1"><stop offset="0" stop-color="#fbe7a8"/><stop offset="1" stop-color="#f0c870"/></linearGradient></defs><rect x="1.5" y="2.5" width="13" height="12" fill="url(#fd)" stroke="#c09a50"/><rect x="10" y="3.2" width="3.5" height="1.6" fill="#4a90e0"/><path d="M3.5 10.5 Q4.5 6 7 3.5" fill="none" stroke="#2eb82e" stroke-width="3"/><path d="M4.5 1 L9.5 0.5 L8.5 5.5Z" fill="#2eb82e"/></svg>
<div class="a" style="left:86px;top:58px;width:24px;height:22px;border:1px solid #26a0f0;background:#e6f2fb"></div>
<svg class="a" style="left:90px;top:64px" width="16" height="13" viewBox="0 0 16 13"><rect x="0.5" y="0.5" width="15" height="12" fill="#fff" stroke="#707070"/><rect x="0.5" y="0.5" width="15" height="2.5" fill="#808080"/><path d="M5.5 3 V12.5" stroke="#707070"/><path d="M2 5.5H4M2 7.5H4M2 9.5H4" stroke="#3a70c0"/><path d="M11 5 L8 7.5 L11 10Z" fill="#2ca02c"/></svg>
<svg class="a" style="left:120px;top:61px" width="15" height="16" viewBox="0 0 15 16"><rect x="0.5" y="0.5" width="14" height="15" fill="#fff" stroke="#707070"/><rect x="3" y="4" width="9" height="8" fill="#f4f4f4" stroke="#909090"/><path d="M5 7.5H11M5 9.5H11" stroke="#5a7aa0"/><rect x="5" y="14" width="5" height="1.5" fill="#20b8c8"/></svg>
<svg class="a" style="left:143px;top:62px" width="16" height="15" viewBox="0 0 16 15"><rect x="4" y="0.5" width="8" height="4" fill="#fff" stroke="#aaa"/><rect x="0.5" y="4" width="15" height="6" fill="#5a5a5a" stroke="#555"/><rect x="3.5" y="9" width="9" height="5.5" fill="#fff" stroke="#999"/><rect x="6" y="11" width="4" height="2" fill="#1a8fe0"/></svg>
<div class="a" style="left:163px;top:58px;width:1px;height:22px;background:#a8a8a8"></div>
<svg class="a" style="left:175px;top:61px" width="13" height="16" viewBox="0 0 13 16"><rect x="0.5" y="0.5" width="12" height="15" fill="#4a7ee0" stroke="#1e3c96"/><rect x="0.5" y="0.5" width="3" height="15" fill="#1e46a8"/><path d="M5 5.2 Q5 3 7.2 3 Q9.6 3 9.6 5.2 Q9.6 6.6 8 7.4 Q7.2 7.9 7.2 9.6" fill="none" stroke="#fff" stroke-width="1.7"/><rect x="6.3" y="11" width="1.8" height="1.8" fill="#fff"/></svg>
<svg class="a" style="left:197px;top:64px" width="16" height="13" viewBox="0 0 16 13"><rect x="0.5" y="0.5" width="15" height="12" fill="#fff" stroke="#707070"/><rect x="0.5" y="0.5" width="15" height="2.5" fill="#808080"/><path d="M10.5 3 V12.5" stroke="#707070"/><path d="M12 5.5H14M12 7.5H14M12 9.5H14" stroke="#3a70c0"/><path d="M5 5 L8 7.5 L5 10Z" fill="#2ca02c"/></svg>

<!-- left pane -->
<div class="a" style="left:7px;top:86px;width:188px;height:601px;background:#fff;border:1px solid #8a8a8a"></div>
<svg class="a" style="left:12px;top:90px" width="16" height="16" viewBox="0 0 16 16"><circle cx="8" cy="8" r="7.2" fill="#fdfdfd" stroke="#8c8c8c" stroke-width="1.4"/><path d="M3 9.5A5.2 5.2 0 0 1 9.5 2.9" fill="none" stroke="#3d7a5a" stroke-width="1.2" stroke-dasharray="1.2 1"/><path d="M4.2 3.6 L9.6 10.4" stroke="#e80c0c" stroke-width="2.4"/><path d="M9 10.6 H12.3 V5.6" fill="none" stroke="#d80c0c" stroke-width="1.8"/></svg>
<div class="t" style="left:33px;top:91px"><svg class="g" width="12" height="14"><use href="#g12_6027"/></svg><svg class="g" width="12" height="14"><use href="#g12_80fd"/></svg></div>
<svg class="a" style="left:18px;top:114px" width="7" height="7" viewBox="0 0 7 7"><path d="M6.5 0.5 L6.5 6.5 L0.5 6.5Z" fill="#404040"/></svg>
<svg class="a" style="left:31px;top:110px" width="16" height="16" viewBox="0 0 16 16"><path d="M0.5 2.5 H6 L7 4 H13.5 V13.5 H0.5Z" fill="#f6dc94" stroke="#c8a860"/><rect x="2" y="3.5" width="10" height="3" fill="#fff6d8"/><rect x="9" y="2" width="3" height="1.5" fill="#3a8ae0"/><rect x="6" y="8" width="9.5" height="7.5" fill="#222" stroke="#666"/><path d="M7 13 L9 10 L11 12.5 L14 9.5" fill="none" stroke="#30d030" stroke-width="1"/></svg>
<div class="t" style="left:52px;top:111px"><svg class="g" width="12" height="14"><use href="#g12_76d1"/></svg><svg class="g" width="12" height="14"><use href="#g12_89c6"/></svg><svg class="g" width="12" height="14"><use href="#g12_5de5"/></svg><svg class="g" width="12" height="14"><use href="#g12_5177"/></svg></div>
<div class="a" style="left:48px;top:128px;width:87px;height:19px;background:#f2f0f2;border:1px solid #dcdcdc"></div>
<svg class="a" style="left:50px;top:131px" width="16" height="13" viewBox="0 0 16 13"><rect x="0.5" y="0.5" width="15" height="12" fill="#1a1a1a" stroke="#8a8a8a"/><rect x="1" y="1" width="14" height="2" fill="#b8b8b8"/><path d="M1.5 8.5 L4 6.5 L5.5 8 L8.5 5 L10 6 L14.5 6" fill="none" stroke="#ff3a5a" stroke-width="1.3"/><path d="M3 10.5H4.5M7 10.5H8.5M10.5 10.5H12" stroke="#3aa040"/></svg>
<div class="t" style="left:71px;top:131px"><svg class="g" width="12" height="14"><use href="#g12_6027"/></svg><svg class="g" width="12" height="14"><use href="#g12_80fd"/></svg><svg class="g" width="12" height="14"><use href="#g12_76d1"/></svg><svg class="g" width="12" height="14"><use href="#g12_89c6"/></svg><svg class="g" width="12" height="14"><use href="#g12_5668"/></svg></div>
<svg class="a" style="left:19px;top:155px" width="6" height="9" viewBox="0 0 6 9"><path d="M0.5 0.5 L5.5 4.5 L0.5 8.5Z" fill="#fff" stroke="#606060"/></svg>
<svg class="a" style="left:31px;top:150px" width="16" height="16" viewBox="0 0 16 16"><path d="M0.5 2.5 H6 L7 4 H13.5 V13.5 H0.5Z" fill="#f6dc94" stroke="#c8a860"/><ellipse cx="10" cy="12" rx="5" ry="3.5" fill="#9cd0ea" stroke="#6aa8c8"/></svg>
<div class="t" style="left:52px;top:151px"><svg class="g" width="12" height="14"><use href="#g12_6570"/></svg><svg class="g" width="12" height="14"><use href="#g12_636e"/></svg><svg class="g" width="12" height="14"><use href="#g12_6536"/></svg><svg class="g" width="12" height="14"><use href="#g12_96c6"/></svg><svg class="g" width="12" height="14"><use href="#g12_5668"/></svg><svg class="g" width="12" height="14"><use href="#g12_96c6"/></svg></div>
<svg class="a" style="left:19px;top:175px" width="6" height="9" viewBox="0 0 6 9"><path d="M0.5 0.5 L5.5 4.5 L0.5 8.5Z" fill="#fff" stroke="#606060"/></svg>
<svg class="a" style="left:31px;top:170px" width="16" height="16" viewBox="0 0 16 16"><path d="M0.5 2.5 H6 L7 4 H13.5 V13.5 H0.5Z" fill="#f6dc94" stroke="#c8a860"/><rect x="8.5" y="7.5" width="6" height="8" fill="#22b022" stroke="#137a13"/></svg>
<div class="t" style="left:52px;top:171px"><svg class="g" width="12" height="14"><use href="#g12_62a5"/></svg><svg class="g" width="12" height="14"><use href="#g12_544a"/></svg></div>

<!-- right pane -->
<div class="a" style="left:199px;top:86px;width:792px;height:601px;background:#f5f1f5;border-top:2px solid #6e6e6e;border-left:1px solid #6e6e6e;border-bottom:1px solid #8a8a8a"></div>
<div class="a" style="left:200px;top:115px;width:791px;height:2px;background:#8c8c8c"></div>
<!-- right toolbar -->
<div class="a" style="left:200px;top:90px;width:23px;height:22px;border:1px solid #26a0f0;background:#e6f2fb"></div>
<svg class="a" style="left:204px;top:94px" width="16" height="13" viewBox="0 0 16 13"><rect x="0.5" y="0.5" width="15" height="12" fill="#f0f4ff" stroke="#7a8ac8"/><path d="M1 2 L4 9 L7 4 L10 9 L15 3" fill="none" stroke="#5a8ad0" stroke-width="1"/><path d="M1 9 L4 6 L7 10 L10 5 L15 8" fill="none" stroke="#3aa83a" stroke-width="1.4"/><path d="M9.5 0.5 V12.5" stroke="#e02020" stroke-width="1.4"/></svg>
<svg class="a" style="left:226px;top:93px" width="16" height="14" viewBox="0 0 16 14"><path d="M0.5 3 L4 0.5 H15.5 V11 L12 13.5 H0.5Z" fill="#a8d4ea"/><path d="M0.5 3 H12 V13.5 H0.5Z" fill="#c8e6f4" stroke="#8ab8d0" stroke-width="0.6"/><path d="M12 3 L15.5 0.5 V11 L12 13.5Z" fill="#5aa8d0"/></svg>
<svg class="a" style="left:249px;top:93px" width="17" height="15" viewBox="0 0 17 15"><rect x="0.5" y="0.5" width="12" height="10" fill="#e8eef8" stroke="#8090b8"/><rect x="2" y="2" width="3" height="2" fill="#c02020"/><rect x="7" y="2" width="3" height="2" fill="#4070d0"/><rect x="3.5" y="5.5" width="13" height="9" fill="#f4f8ff" stroke="#8090b8"/><path d="M4.5 12 L7 10 L9 12 L12 9.5 L15.5 11" fill="none" stroke="#3aa83a"/></svg>
<svg class="a" style="left:273px;top:99px" width="8" height="4" viewBox="0 0 8 4"><path d="M0 0 H8 L4 4Z" fill="#111"/></svg>
<div class="a" style="left:286px;top:91px;width:1px;height:20px;background:#a8a8a8"></div>
<svg class="a" style="left:297px;top:93px" width="17" height="16" viewBox="0 0 17 16"><path d="M6 0.5 H11 V5.5 H16.5 V10.5 H11 V15.5 H6 V10.5 H0.5 V5.5 H6Z" fill="#3cc23c" stroke="#1a8a1a"/></svg>
<svg class="a" style="left:320px;top:93px" width="16" height="15" viewBox="0 0 16 15"><path d="M2 1.5 L14 13.5 M14 1.5 L2 13.5" stroke="#a01818" stroke-width="4.4"/><path d="M2 1.5 L14 13.5 M14 1.5 L2 13.5" stroke="#ee2a2a" stroke-width="3"/></svg>
<svg class="a" style="left:344px;top:92px" width="14" height="17" viewBox="0 0 14 17"><path d="M10 0.5 L13.5 4 L5 13 L1 16.5 L1.5 11.5Z" fill="#d8d030" stroke="#8a8a20"/><path d="M9 2 L12 5 L10 7 L7 4Z" fill="#60a8d8"/></svg>
<div class="a" style="left:363px;top:91px;width:1px;height:20px;background:#a8a8a8"></div>
<svg class="a" style="left:376px;top:94px" width="13" height="15" viewBox="0 0 13 15"><rect x="0.5" y="0.5" width="7" height="9" fill="#fff" stroke="#9aa"/><rect x="5.5" y="5.5" width="7" height="9" fill="#fff" stroke="#9aa"/><path d="M7 8.5H11M7 10.5H11M7 12.5H11" stroke="#3a70c0"/></svg>
<svg class="a" style="left:399px;top:93px" width="13" height="15" viewBox="0 0 13 15"><rect x="0.5" y="1.5" width="12" height="13" fill="#8a5a2a" stroke="#6a4018"/><rect x="2" y="3" width="9" height="10" fill="#fff"/><rect x="4" y="0.5" width="5" height="2.5" fill="#555"/><path d="M3 6H10M3 8H10M3 10H10" stroke="#7a9ac0"/></svg>
<svg class="a" style="left:420px;top:93px" width="15" height="16" viewBox="0 0 15 16"><rect x="0.5" y="0.5" width="14" height="15" fill="#fff" stroke="#707070"/><rect x="3" y="4" width="9" height="8" fill="#f4f4f4" stroke="#909090"/><path d="M5 7.5H11M5 9.5H11" stroke="#5a7aa0"/><rect x="5" y="14" width="5" height="1.5" fill="#20b8c8"/></svg>
<svg class="a" style="left:443px;top:93px" width="16" height="16" viewBox="0 0 16 16"><circle cx="6.5" cy="6.5" r="5" fill="#9a9a9a" stroke="#8a8a8a" stroke-width="1.5"/><path d="M10 10 L15 15" stroke="#8a8a8a" stroke-width="3"/></svg>
<div class="a" style="left:463px;top:91px;width:1px;height:20px;background:#a8a8a8"></div>
<div class="a" style="left:474px;top:94px;width:5px;height:14px;background:#2a96e0;border:1px solid #1a70b8"></div>
<div class="a" style="left:483px;top:94px;width:5px;height:14px;background:#2a96e0;border:1px solid #1a70b8"></div>
<svg class="a" style="left:498px;top:94px" width="14" height="14" viewBox="0 0 14 14"><path d="M0 0 L9 7 L0 14Z" fill="#a0a0a0"/><rect x="10" y="0" width="3" height="14" fill="#a0a0a0"/></svg>
<div class="a" style="left:517px;top:91px;width:1px;height:20px;background:#a8a8a8"></div>

<!-- chart -->
<div class="a" style="left:245px;top:144px;width:702px;height:332px;background:#fff"></div>
<svg class="a" style="left:0;top:0" width="997" height="716" shape-rendering="crispEdges">
<defs><pattern id="h" width="8" height="5" patternUnits="userSpaceOnUse" x="2" y="139"><path d="M0 5 L5 0" stroke="#444" stroke-width="1" shape-rendering="auto"/></pattern></defs>
<rect x="245" y="139" width="702" height="5" fill="#fff"/>
<rect x="245" y="139" width="702" height="5" fill="url(#h)"/>
<path d="M245 475h1v1h-1zM246 475h1v1h-1zM247 475h1v1h-1zM248 475h1v1h-1zM249 475h1v1h-1zM250 475h1v1h-1zM251 475h1v1h-1zM252 452h1v24h-1zM253 404h1v48h-1zM254 356h1v48h-1zM255 308h1v48h-1zM256 260h1v48h-1zM257 212h1v48h-1zM258 164h1v48h-1zM259 139h1v25h-1zM260 163h1v48h-1zM261 211h1v47h-1zM262 258h1v48h-1zM263 306h1v48h-1zM264 354h1v47h-1zM265 401h1v48h-1zM266 449h1v24h-1zM267 472h1v1h-1zM268 473h1v1h-1zM269 473h1v1h-1zM270 474h1v1h-1zM271 474h1v1h-1zM272 475h1v1h-1zM273 475h1v1h-1zM274 475h1v1h-1zM275 475h1v1h-1zM276 475h1v1h-1zM277 475h1v1h-1zM278 475h1v1h-1zM279 475h1v1h-1zM280 475h1v1h-1zM295 472h1v1h-1zM296 472h1v1h-1zM297 473h1v1h-1zM298 473h1v1h-1zM299 474h1v1h-1zM300 474h1v1h-1zM301 475h1v1h-1zM302 475h1v1h-1zM303 475h1v1h-1zM304 475h1v1h-1zM305 475h1v1h-1zM306 475h1v1h-1zM307 475h1v1h-1zM308 475h1v1h-1zM309 475h1v1h-1zM310 475h1v1h-1zM311 475h1v1h-1zM312 475h1v1h-1zM313 475h1v1h-1zM314 475h1v1h-1zM315 475h1v1h-1zM316 475h1v1h-1zM317 475h1v1h-1zM318 475h1v1h-1zM319 475h1v1h-1zM320 475h1v1h-1zM321 475h1v1h-1zM322 475h1v1h-1zM323 144h1v332h-1zM324 475h1v1h-1zM325 475h1v1h-1zM326 475h1v1h-1zM327 475h1v1h-1zM328 475h1v1h-1zM329 475h1v1h-1zM330 475h1v1h-1zM331 475h1v1h-1zM332 475h1v1h-1zM333 475h1v1h-1zM334 475h1v1h-1zM335 475h1v1h-1zM336 475h1v1h-1zM337 452h1v24h-1zM338 404h1v48h-1zM339 356h1v48h-1zM340 308h1v48h-1zM341 260h1v48h-1zM342 212h1v48h-1zM343 164h1v48h-1zM344 139h1v25h-1zM345 163h1v48h-1zM346 211h1v48h-1zM347 259h1v48h-1zM348 307h1v48h-1zM349 355h1v48h-1zM350 403h1v48h-1zM351 451h1v25h-1zM352 475h1v1h-1zM353 475h1v1h-1zM354 475h1v1h-1zM355 475h1v1h-1zM356 475h1v1h-1zM357 475h1v1h-1zM358 475h1v1h-1zM372 296h1v12h-1zM373 308h1v22h-1zM374 330h1v22h-1zM375 352h1v23h-1zM376 375h1v22h-1zM377 397h1v23h-1zM378 420h1v22h-1zM379 442h1v22h-1zM380 464h1v12h-1zM381 475h1v1h-1zM382 475h1v1h-1zM383 475h1v1h-1zM384 475h1v1h-1zM385 475h1v1h-1zM386 475h1v1h-1zM387 475h1v1h-1zM388 475h1v1h-1zM389 475h1v1h-1zM390 475h1v1h-1zM391 475h1v1h-1zM392 475h1v1h-1zM393 475h1v1h-1zM394 475h1v1h-1zM395 475h1v1h-1zM396 475h1v1h-1zM397 475h1v1h-1zM398 475h1v1h-1zM399 475h1v1h-1zM400 475h1v1h-1zM401 475h1v1h-1zM402 475h1v1h-1zM403 475h1v1h-1zM404 475h1v1h-1zM405 474h1v1h-1zM406 474h1v1h-1zM407 474h1v1h-1zM408 474h1v1h-1zM409 474h1v1h-1zM410 474h1v1h-1zM411 474h1v1h-1zM412 475h1v1h-1zM413 475h1v1h-1zM414 475h1v1h-1zM415 475h1v1h-1zM416 475h1v1h-1zM417 475h1v1h-1zM418 475h1v1h-1zM419 475h1v1h-1zM420 475h1v1h-1zM421 475h1v1h-1zM422 475h1v1h-1zM436 472h1v1h-1zM437 472h1v1h-1zM438 473h1v1h-1zM439 473h1v1h-1zM440 473h1v1h-1zM441 473h1v1h-1zM442 474h1v1h-1zM443 474h1v1h-1zM444 474h1v1h-1zM445 474h1v1h-1zM446 474h1v1h-1zM447 475h1v1h-1zM448 475h1v1h-1zM449 475h1v1h-1zM450 475h1v1h-1zM451 475h1v1h-1zM452 475h1v1h-1zM453 475h1v1h-1zM454 475h1v1h-1zM455 475h1v1h-1zM456 475h1v1h-1zM457 469h1v7h-1zM458 456h1v13h-1zM459 443h1v13h-1zM460 430h1v13h-1zM461 417h1v13h-1zM462 404h1v13h-1zM463 391h1v13h-1zM464 378h1v13h-1zM465 371h1v8h-1zM466 379h1v15h-1zM467 394h1v14h-1zM468 408h1v15h-1zM469 423h1v15h-1zM470 438h1v14h-1zM471 452h1v15h-1zM472 467h1v8h-1zM473 474h1v1h-1zM474 474h1v1h-1zM475 474h1v1h-1zM476 475h1v1h-1zM477 475h1v1h-1zM478 475h1v1h-1zM479 475h1v1h-1zM480 475h1v1h-1zM481 475h1v1h-1zM482 475h1v1h-1zM483 475h1v1h-1zM484 475h1v1h-1zM485 475h1v1h-1zM486 475h1v1h-1zM487 475h1v1h-1zM488 475h1v1h-1zM489 475h1v1h-1zM490 475h1v1h-1zM491 475h1v1h-1zM492 475h1v1h-1zM493 475h1v1h-1zM494 475h1v1h-1zM495 475h1v1h-1zM496 475h1v1h-1zM497 475h1v1h-1zM498 475h1v1h-1zM499 475h1v1h-1zM500 475h1v1h-1zM501 475h1v1h-1zM502 475h1v1h-1zM503 475h1v1h-1zM504 475h1v1h-1zM505 475h1v1h-1zM506 475h1v1h-1zM507 475h1v1h-1zM508 475h1v1h-1zM509 475h1v1h-1zM510 475h1v1h-1zM511 475h1v1h-1zM512 475h1v1h-1zM513 475h1v1h-1zM514 452h1v24h-1zM515 404h1v48h-1zM516 356h1v48h-1zM517 308h1v48h-1zM518 260h1v48h-1zM519 212h1v48h-1zM520 164h1v48h-1zM521 139h1v25h-1zM522 163h1v48h-1zM523 211h1v48h-1zM524 259h1v48h-1zM525 307h1v48h-1zM526 355h1v48h-1zM527 403h1v48h-1zM528 451h1v24h-1zM529 474h1v1h-1zM530 474h1v1h-1zM531 474h1v1h-1zM532 475h1v1h-1zM533 475h1v1h-1zM534 475h1v1h-1zM535 475h1v1h-1zM536 475h1v1h-1zM537 475h1v1h-1zM538 475h1v1h-1zM539 475h1v1h-1zM540 475h1v1h-1zM541 475h1v1h-1zM542 475h1v1h-1zM543 475h1v1h-1zM544 475h1v1h-1zM545 475h1v1h-1zM546 475h1v1h-1zM547 475h1v1h-1zM548 475h1v1h-1zM549 475h1v1h-1zM550 475h1v1h-1zM551 475h1v1h-1zM552 475h1v1h-1zM553 474h1v1h-1zM554 474h1v1h-1zM555 474h1v1h-1zM556 474h1v1h-1zM557 474h1v1h-1zM558 474h1v1h-1zM559 474h1v1h-1zM560 474h1v1h-1zM561 474h1v1h-1zM562 474h1v1h-1zM563 474h1v1h-1zM564 474h1v1h-1zM565 474h1v1h-1zM566 474h1v1h-1zM567 474h1v1h-1zM568 475h1v1h-1zM569 475h1v1h-1zM570 475h1v1h-1zM571 475h1v1h-1zM572 475h1v1h-1zM573 475h1v1h-1zM574 475h1v1h-1zM575 475h1v1h-1zM576 475h1v1h-1zM577 475h1v1h-1zM578 475h1v1h-1zM579 475h1v1h-1zM580 475h1v1h-1zM581 475h1v1h-1zM582 475h1v1h-1zM583 475h1v1h-1zM584 475h1v1h-1zM585 475h1v1h-1zM586 475h1v1h-1zM587 475h1v1h-1zM588 475h1v1h-1zM589 474h1v1h-1zM590 474h1v1h-1zM591 474h1v1h-1zM592 474h1v1h-1zM593 474h1v1h-1zM594 474h1v1h-1zM595 474h1v1h-1zM596 474h1v1h-1zM597 474h1v1h-1zM598 474h1v1h-1zM599 474h1v1h-1zM600 474h1v1h-1zM601 474h1v1h-1zM602 474h1v1h-1zM603 474h1v1h-1zM604 474h1v1h-1zM605 474h1v1h-1zM606 474h1v1h-1zM607 474h1v1h-1zM608 474h1v1h-1zM609 474h1v1h-1zM610 475h1v1h-1zM611 475h1v1h-1zM612 475h1v1h-1zM613 464h1v12h-1zM614 441h1v23h-1zM615 418h1v23h-1zM616 395h1v23h-1zM617 371h1v24h-1zM618 348h1v23h-1zM619 325h1v23h-1zM620 313h1v12h-1zM621 325h1v23h-1zM622 348h1v23h-1zM623 371h1v23h-1zM624 394h1v24h-1zM625 418h1v23h-1zM626 441h1v23h-1zM627 464h1v12h-1zM628 475h1v1h-1zM629 474h1v1h-1zM630 474h1v1h-1zM631 474h1v1h-1zM632 474h1v1h-1zM633 473h1v1h-1zM634 473h1v1h-1zM635 473h1v1h-1zM636 474h1v1h-1zM637 474h1v1h-1zM638 474h1v1h-1zM639 474h1v1h-1zM640 475h1v1h-1zM641 475h1v1h-1zM642 475h1v1h-1zM643 475h1v1h-1zM644 475h1v1h-1zM645 475h1v1h-1zM646 475h1v1h-1zM647 475h1v1h-1zM648 475h1v1h-1zM649 474h1v2h-1zM650 471h1v3h-1zM651 468h1v3h-1zM652 466h1v2h-1zM653 463h1v3h-1zM654 460h1v3h-1zM655 457h1v3h-1zM656 455h1v2h-1zM657 457h1v2h-1zM658 459h1v2h-1zM659 461h1v2h-1zM660 463h1v3h-1zM661 466h1v2h-1zM662 468h1v2h-1zM663 470h1v2h-1zM664 471h1v1h-1zM665 471h1v1h-1zM666 471h1v1h-1zM667 472h1v1h-1zM668 472h1v1h-1zM669 472h1v1h-1zM670 472h1v1h-1zM671 472h1v1h-1zM672 472h1v1h-1zM673 472h1v1h-1zM674 473h1v1h-1zM675 473h1v1h-1zM676 473h1v1h-1zM677 473h1v1h-1zM678 473h1v1h-1zM679 474h1v1h-1zM680 474h1v1h-1zM681 474h1v1h-1zM682 474h1v1h-1zM683 475h1v1h-1zM684 475h1v1h-1zM685 475h1v1h-1zM686 475h1v1h-1zM687 475h1v1h-1zM688 475h1v1h-1zM689 475h1v1h-1zM690 475h1v1h-1zM691 452h1v24h-1zM692 404h1v48h-1zM693 356h1v48h-1zM694 308h1v48h-1zM695 260h1v48h-1zM696 212h1v48h-1zM697 164h1v48h-1zM698 139h1v25h-1zM699 163h1v48h-1zM700 211h1v48h-1zM701 259h1v48h-1zM702 307h1v48h-1zM703 355h1v48h-1zM704 403h1v48h-1zM705 451h1v25h-1zM706 475h1v1h-1zM707 475h1v1h-1zM708 475h1v1h-1zM709 474h1v1h-1zM710 474h1v1h-1zM711 474h1v1h-1zM712 474h1v1h-1zM713 474h1v1h-1zM714 474h1v1h-1zM715 474h1v1h-1zM716 475h1v1h-1zM717 475h1v1h-1zM718 475h1v1h-1zM719 475h1v1h-1zM720 475h1v1h-1zM721 475h1v1h-1zM722 475h1v1h-1zM723 475h1v1h-1zM724 475h1v1h-1zM725 475h1v1h-1zM726 470h1v6h-1zM727 458h1v12h-1zM728 447h1v11h-1zM729 435h1v12h-1zM730 424h1v11h-1zM731 412h1v12h-1zM732 401h1v11h-1zM733 389h1v12h-1zM734 383h1v7h-1zM735 390h1v13h-1zM736 403h1v13h-1zM737 416h1v13h-1zM738 429h1v14h-1zM739 443h1v13h-1zM740 456h1v13h-1zM741 469h1v7h-1zM742 475h1v1h-1zM743 475h1v1h-1zM744 475h1v1h-1zM745 475h1v1h-1zM746 475h1v1h-1zM747 475h1v1h-1zM748 475h1v1h-1zM762 139h1v24h-1zM763 163h1v48h-1zM764 211h1v48h-1zM765 259h1v47h-1zM766 306h1v48h-1zM767 354h1v48h-1zM768 402h1v48h-1zM769 450h1v24h-1zM770 473h1v1h-1zM771 474h1v1h-1zM772 474h1v1h-1zM773 474h1v1h-1zM774 474h1v1h-1zM775 475h1v1h-1zM776 475h1v1h-1zM777 475h1v1h-1zM778 475h1v1h-1zM779 475h1v1h-1zM780 475h1v1h-1zM781 475h1v1h-1zM782 475h1v1h-1zM783 452h1v24h-1zM784 404h1v48h-1zM785 356h1v48h-1zM786 308h1v48h-1zM787 260h1v48h-1zM788 212h1v48h-1zM789 164h1v48h-1zM790 139h1v25h-1zM791 163h1v48h-1zM792 211h1v48h-1zM793 259h1v47h-1zM794 306h1v48h-1zM795 354h1v48h-1zM796 402h1v48h-1zM797 450h1v24h-1zM798 473h1v1h-1zM799 473h1v1h-1zM800 473h1v1h-1zM801 474h1v1h-1zM802 474h1v1h-1zM803 474h1v1h-1zM804 474h1v1h-1zM805 474h1v1h-1zM806 474h1v1h-1zM807 474h1v1h-1zM808 474h1v1h-1zM809 474h1v1h-1zM810 474h1v1h-1zM811 474h1v1h-1zM812 474h1v1h-1zM813 474h1v1h-1zM814 474h1v1h-1zM815 475h1v1h-1zM816 475h1v1h-1zM817 475h1v1h-1zM818 475h1v1h-1zM819 475h1v1h-1zM820 475h1v1h-1zM821 475h1v1h-1zM822 475h1v1h-1zM823 475h1v1h-1zM824 475h1v1h-1zM825 475h1v1h-1zM826 462h1v14h-1zM827 435h1v27h-1zM828 408h1v27h-1zM829 381h1v27h-1zM830 354h1v27h-1zM831 327h1v27h-1zM832 300h1v27h-1zM833 286h1v14h-1zM834 300h1v27h-1zM835 327h1v27h-1zM836 354h1v26h-1zM837 380h1v27h-1zM838 407h1v27h-1zM839 434h1v27h-1zM840 461h1v14h-1zM841 474h1v1h-1zM842 474h1v1h-1zM843 474h1v1h-1zM844 474h1v1h-1zM845 474h1v1h-1zM846 474h1v1h-1zM847 474h1v1h-1zM848 472h1v2h-1zM849 471h1v1h-1zM850 470h1v1h-1zM851 468h1v2h-1zM852 467h1v1h-1zM853 465h1v2h-1zM854 464h1v1h-1zM855 465h1v2h-1zM856 467h1v1h-1zM857 468h1v2h-1zM858 470h1v2h-1zM859 472h1v1h-1zM860 473h1v2h-1zM861 475h1v1h-1zM862 475h1v1h-1zM863 475h1v1h-1zM864 475h1v1h-1zM865 475h1v1h-1zM866 475h1v1h-1zM867 475h1v1h-1zM868 452h1v24h-1zM869 404h1v48h-1zM870 356h1v48h-1zM871 308h1v48h-1zM872 260h1v48h-1zM873 212h1v48h-1zM874 164h1v48h-1zM875 139h1v25h-1zM876 163h1v48h-1zM877 211h1v48h-1zM878 259h1v48h-1zM879 307h1v48h-1zM880 355h1v48h-1zM881 403h1v48h-1zM882 451h1v24h-1zM883 474h1v1h-1zM884 474h1v1h-1zM885 474h1v1h-1zM886 474h1v1h-1zM887 474h1v1h-1zM888 474h1v1h-1zM889 474h1v1h-1zM890 474h1v1h-1zM891 474h1v1h-1zM892 474h1v1h-1zM893 474h1v1h-1zM894 474h1v1h-1zM895 474h1v1h-1zM896 474h1v1h-1zM897 474h1v1h-1zM898 474h1v1h-1zM899 474h1v1h-1zM900 474h1v1h-1zM901 474h1v1h-1zM902 474h1v1h-1zM903 474h1v1h-1zM904 474h1v1h-1zM905 474h1v1h-1zM906 474h1v1h-1zM907 474h1v1h-1zM908 474h1v1h-1zM909 474h1v1h-1zM910 474h1v1h-1zM911 474h1v1h-1zM912 473h1v1h-1zM913 473h1v1h-1zM914 472h1v1h-1zM915 471h1v1h-1zM916 470h1v1h-1zM917 470h1v1h-1zM918 469h1v1h-1zM919 470h1v1h-1zM920 471h1v1h-1zM921 472h1v1h-1zM922 472h1v1h-1zM923 473h1v1h-1zM924 474h1v1h-1zM925 475h1v1h-1zM926 475h1v1h-1zM927 475h1v1h-1zM928 475h1v1h-1zM929 475h1v1h-1zM930 475h1v1h-1zM931 475h1v1h-1zM932 463h1v13h-1zM933 437h1v26h-1zM934 411h1v26h-1zM935 385h1v26h-1zM936 359h1v26h-1zM937 333h1v26h-1zM938 307h1v26h-1zM939 294h1v13h-1zM940 306h1v24h-1zM941 330h1v23h-1zM942 353h1v24h-1zM943 377h1v23h-1zM944 400h1v24h-1zM945 424h1v12h-1z" fill="#ff0000" stroke="none"/>
<g stroke="#000" stroke-width="1">
<path d="M245.5 139.5 H946.5 V475.5 H245.5Z M245 144.5 H947" fill="none"/>
<line x1="324.5" y1="475" x2="324.5" y2="479"/><line x1="394.5" y1="475" x2="394.5" y2="479"/><line x1="465.5" y1="475" x2="465.5" y2="479"/><line x1="536.5" y1="475" x2="536.5" y2="479"/><line x1="606.5" y1="475" x2="606.5" y2="479"/><line x1="677.5" y1="475" x2="677.5" y2="479"/><line x1="748.5" y1="475" x2="748.5" y2="479"/><line x1="818.5" y1="475" x2="818.5" y2="479"/><line x1="889.5" y1="475" x2="889.5" y2="479"/><line x1="245.5" y1="475" x2="245.5" y2="479"/><line x1="946.5" y1="475" x2="946.5" y2="479"/><line x1="241" y1="144.5" x2="245" y2="144.5"/><line x1="241" y1="210.5" x2="245" y2="210.5"/><line x1="241" y1="276.5" x2="245" y2="276.5"/><line x1="241" y1="343.5" x2="245" y2="343.5"/><line x1="241" y1="409.5" x2="245" y2="409.5"/><line x1="241" y1="475.5" x2="245" y2="475.5"/></g>
</svg>
<div class="t num" style="right:758px;top:138.5px">100</div><div class="t num" style="right:758px;top:204.5px">80</div><div class="t num" style="right:758px;top:270.5px">60</div><div class="t num" style="right:758px;top:337.5px">40</div><div class="t num" style="right:758px;top:403.5px">20</div><div class="t num" style="right:758px;top:469.5px">0</div>
<div class="t num" style="left:221px;top:484px;width:48px;text-align:center">19:48:19</div><div class="t num" style="left:299.5px;top:484px;width:48px;text-align:center">19:48:30</div><div class="t num" style="left:370.5px;top:484px;width:48px;text-align:center">19:47:00</div><div class="t num" style="left:441px;top:484px;width:48px;text-align:center">19:47:10</div><div class="t num" style="left:512px;top:484px;width:48px;text-align:center">19:47:20</div><div class="t num" style="left:582.5px;top:484px;width:48px;text-align:center">19:47:30</div><div class="t num" style="left:653px;top:484px;width:48px;text-align:center">19:47:40</div><div class="t num" style="left:723.5px;top:484px;width:48px;text-align:center">19:47:50</div><div class="t num" style="left:794px;top:484px;width:48px;text-align:center">19:48:00</div><div class="t num" style="left:865px;top:484px;width:48px;text-align:center">19:48:10</div><div class="t num" style="left:921px;top:484px;width:48px;text-align:center">19:48:18</div>

<!-- values bar -->
<div class="t" style="left:215px;top:520px"><svg class="g" width="12" height="14"><use href="#g12_6700"/></svg><svg class="g" width="12" height="14"><use href="#g12_65b0"/></svg></div>
<div class="vb" style="left:243px;width:112px">0.000</div>
<div class="t" style="left:364px;top:520px"><svg class="g" width="12" height="14"><use href="#g12_5e73"/></svg><svg class="g" width="12" height="14"><use href="#g12_5747"/></svg></div>
<div class="vb" style="left:393px;width:112px">11.038</div>
<div class="t" style="left:515px;top:520px"><svg class="g" width="12" height="14"><use href="#g12_6700"/></svg><svg class="g" width="12" height="14"><use href="#g12_5c0f"/></svg></div>
<div class="vb" style="left:543px;width:112px">0.000</div>
<div class="t" style="left:665px;top:520px"><svg class="g" width="12" height="14"><use href="#g12_6700"/></svg><svg class="g" width="12" height="14"><use href="#g12_5927"/></svg></div>
<div class="vb" style="left:693px;width:111px">145.847</div>
<div class="t" style="left:815px;top:520px"><svg class="g" width="12" height="14"><use href="#g12_6301"/></svg><svg class="g" width="12" height="14"><use href="#g12_7eed"/></svg><svg class="g" width="12" height="14"><use href="#g12_65f6"/></svg><svg class="g" width="12" height="14"><use href="#g12_95f4"/></svg></div>
<div class="vb" style="left:867px;width:111px">1:40</div>

<!-- legend -->
<div class="a" style="left:210px;top:546px;width:769px;height:129px;background:#f5f1f5;border:1px solid #8c8c8c"></div>
<div class="a" style="left:213px;top:549px;width:59px;height:19px;background:#fdfcfd"></div><div class="t" style="left:217px;top:552px"><svg class="g" width="12" height="14"><use href="#g12_663e"/></svg><svg class="g" width="12" height="14"><use href="#g12_793a"/></svg></div><div class="a" style="left:275px;top:549px;width:58px;height:19px;background:#fdfcfd"></div><div class="t" style="left:279px;top:552px"><svg class="g" width="12" height="14"><use href="#g12_989c"/></svg><svg class="g" width="12" height="14"><use href="#g12_8272"/></svg></div><div class="a" style="left:336px;top:549px;width:58px;height:19px;background:#fdfcfd"></div><div class="t" style="left:340px;top:552px"><svg class="g" width="12" height="14"><use href="#g12_6bd4"/></svg><svg class="g" width="12" height="14"><use href="#g12_4f8b"/></svg></div><div class="a" style="left:397px;top:549px;width:150px;height:19px;background:#fdfcfd"></div><div class="t" style="left:401px;top:552px"><svg class="g" width="12" height="14"><use href="#g12_8ba1"/></svg><svg class="g" width="12" height="14"><use href="#g12_6570"/></svg><svg class="g" width="12" height="14"><use href="#g12_5668"/></svg></div><div class="a" style="left:550px;top:549px;width:73px;height:19px;background:#fdfcfd"></div><div class="t" style="left:554px;top:552px"><svg class="g" width="12" height="14"><use href="#g12_5b9e"/></svg><svg class="g" width="12" height="14"><use href="#g12_4f8b"/></svg></div><div class="a" style="left:626px;top:549px;width:73px;height:19px;background:#fdfcfd"></div><div class="t" style="left:630px;top:552px"><svg class="g" width="12" height="14"><use href="#g12_7236"/></svg><svg class="g" width="12" height="14"><use href="#g12_7cfb"/></svg></div><div class="a" style="left:702px;top:549px;width:151px;height:19px;background:#fdfcfd"></div><div class="t" style="left:706px;top:552px"><svg class="g" width="12" height="14"><use href="#g12_5bf9"/></svg><svg class="g" width="12" height="14"><use href="#g12_8c61"/></svg></div><div class="a" style="left:856px;top:549px;width:121px;height:19px;background:#fdfcfd"></div><div class="t" style="left:860px;top:552px"><svg class="g" width="12" height="14"><use href="#g12_8ba1"/></svg><svg class="g" width="12" height="14"><use href="#g12_7b97"/></svg><svg class="g" width="12" height="14"><use href="#g12_673a"/></svg></div>
<div class="a cb" style="left:216px;top:569px"></div><svg class="a" style="left:219px;top:573px" width="10" height="9" viewBox="0 0 10 9"><path d="M1 4.5 L3.5 7.5 L9 1" fill="none" stroke="#000" stroke-width="2.2"/></svg><div class="a" style="left:277px;top:577px;width:53px;height:1px;background:#ff0000"></div><div class="t" style="left:338px;top:571px;color:#000;letter-spacing:0.4px">1.0</div><div class="t" style="left:400px;top:571px;color:#000;letter-spacing:0.4px">% Disk Time</div><div class="t" style="left:552px;top:571px;color:#000;letter-spacing:0.4px">0 C: D:</div><div class="t" style="left:629px;top:571px;color:#000;letter-spacing:0.4px">---</div><div class="t" style="left:704px;top:571px;color:#000;letter-spacing:0.4px">PhysicalDisk</div><div class="t" style="left:857px;top:571px;color:#000;letter-spacing:0.4px">\\ISO9000-SERVE...</div><div class="a cb" style="left:216px;top:586px"></div><div class="a" style="left:277px;top:594px;width:53px;height:1px;background:#00ff00"></div><div class="t" style="left:338px;top:588px;color:#000;letter-spacing:0.4px">1.0</div><div class="t" style="left:400px;top:588px;color:#000;letter-spacing:0.4px">% Disk Time</div><div class="t" style="left:552px;top:588px;color:#000;letter-spacing:0.4px">1 E:</div><div class="t" style="left:629px;top:588px;color:#000;letter-spacing:0.4px">---</div><div class="t" style="left:704px;top:588px;color:#000;letter-spacing:0.4px">PhysicalDisk</div><div class="t" style="left:857px;top:588px;color:#000;letter-spacing:0.4px">\\ISO9000-SERVE...</div><div class="a cb" style="left:216px;top:603px"></div><div class="a" style="left:277px;top:611px;width:53px;height:1px;background:#0000ff"></div><div class="t" style="left:338px;top:605px;color:#000;letter-spacing:0.4px">1.0</div><div class="t" style="left:400px;top:605px;color:#000;letter-spacing:0.4px">% Disk Time</div><div class="t" style="left:552px;top:605px;color:#000;letter-spacing:0.4px">2 F:</div><div class="t" style="left:629px;top:605px;color:#000;letter-spacing:0.4px">---</div><div class="t" style="left:704px;top:605px;color:#000;letter-spacing:0.4px">PhysicalDisk</div><div class="t" style="left:857px;top:605px;color:#000;letter-spacing:0.4px">\\ISO9000-SERVE...</div><div class="a cb" style="left:216px;top:620px"></div><div class="a" style="left:277px;top:628px;width:53px;height:1px;background:#800080"></div><div class="t" style="left:338px;top:622px;color:#000;letter-spacing:0.4px">1.0</div><div class="t" style="left:400px;top:622px;color:#000;letter-spacing:0.4px">% Disk Time</div><div class="t" style="left:552px;top:622px;color:#000;letter-spacing:0.4px">3 G:</div><div class="t" style="left:629px;top:622px;color:#000;letter-spacing:0.4px">---</div><div class="t" style="left:704px;top:622px;color:#000;letter-spacing:0.4px">PhysicalDisk</div><div class="t" style="left:857px;top:622px;color:#000;letter-spacing:0.4px">\\ISO9000-SERVE...</div><div class="a" style="left:212px;top:637px;width:766px;height:17px;background:#3399ff"></div><svg class="a" style="left:212px;top:637px" width="766" height="17" shape-rendering="crispEdges"><rect x="0.5" y="0.5" width="765" height="16" fill="none" stroke="#f0a040"/><rect x="0.5" y="0.5" width="765" height="16" fill="none" stroke="#000" stroke-dasharray="1 1"/></svg><div class="a cb" style="left:216px;top:637px"></div><div class="a" style="left:277px;top:645px;width:53px;height:1px;background:#d878a8"></div><div class="t" style="left:338px;top:639px;color:#fff;letter-spacing:0.4px">1.0</div><div class="t" style="left:400px;top:639px;color:#fff;letter-spacing:0.4px">% Disk Time</div><div class="t" style="left:552px;top:639px;color:#fff;letter-spacing:0.4px">4 H:</div><div class="t" style="left:629px;top:639px;color:#fff;letter-spacing:0.4px">---</div><div class="t" style="left:704px;top:639px;color:#fff;letter-spacing:0.4px">PhysicalDisk</div><div class="t" style="left:857px;top:639px;color:#fff;letter-spacing:0.4px">\\ISO9000-SERVE...</div><div class="a cb" style="left:216px;top:654px"></div><div class="a" style="left:277px;top:662px;width:53px;height:1px;background:#1eb4ff"></div><div class="t" style="left:338px;top:656px;color:#000;letter-spacing:0.4px">1.0</div><div class="t" style="left:400px;top:656px;color:#000;letter-spacing:0.4px">% Disk Time</div><div class="t" style="left:552px;top:656px;color:#000;letter-spacing:0.4px">5 I:</div><div class="t" style="left:629px;top:656px;color:#000;letter-spacing:0.4px">---</div><div class="t" style="left:704px;top:656px;color:#000;letter-spacing:0.4px">PhysicalDisk</div><div class="t" style="left:857px;top:656px;color:#000;letter-spacing:0.4px">\\ISO9000-SERVE...</div>

<!-- status bar -->
<div class="a" style="left:7px;top:687px;width:984px;height:22px;background:#fdfcfd;border-top:1px solid #8a8a8a;border-bottom:1px solid #b0aab0"></div>
<div class="a" style="left:770px;top:688px;width:1px;height:20px;background:#d0d0d0"></div><div class="a" style="left:903px;top:688px;width:1px;height:20px;background:#d0d0d0"></div>
<!-- watermark -->
<div class="a" style="left:862px;top:686px;width:25px;height:24px;background:#74bde0"></div>
<svg class="a" style="left:864px;top:688px" width="21" height="20" viewBox="0 0 21 20"><g stroke="#fff" stroke-width="1.5" fill="none" stroke-linecap="round"><path d="M10.5 1.5V18.5M3.1 5.7L17.9 14.3M3.1 14.3L17.9 5.7M8.5 2.5L10.5 4.5L12.5 2.5M8.5 17.5L10.5 15.5L12.5 17.5M3 8.5L5.5 7.5L4.8 5M18 8.5L15.5 7.5L16.2 5M3 11.5L5.5 12.5L4.8 15M18 11.5L15.5 12.5L16.2 15"/><circle cx="10.5" cy="10" r="3.2" stroke-width="1.8"/></g></svg>
<div class="t" style="left:891px;top:689px;font-size:15px;line-height:18px;color:#7a7a7a;letter-spacing:2px">im2828.com</div>
</body></html>
